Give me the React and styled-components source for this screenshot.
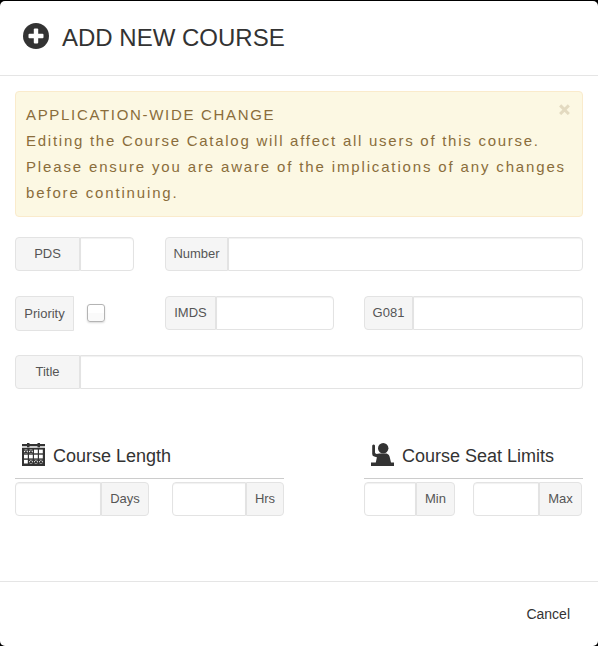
import React from "react";
import styled, { createGlobalStyle } from "styled-components";

const GlobalStyle = createGlobalStyle`
  * { box-sizing: border-box; }
  body {
    margin: 0;
    background: #000;
    font-family: "Liberation Sans", Arial, sans-serif;
    color: #333;
  }
`;

const Modal = styled.main`
  display: flex;
  flex-direction: column;
  height: 645px;
  margin-top: 1px;
  background: #fff;
  border-radius: 5px;
`;

const Header = styled.header`
  display: flex;
  align-items: center;
  gap: 13px;
  height: 75px;
  padding: 0 23px 4px;
  border-bottom: 1px solid #e5e5e5;
`;

const ModalTitle = styled.h1`
  margin: 3px 0 0;
  font-size: 24px;
  font-weight: 400;
  line-height: 30px;
  white-space: nowrap;
`;

const Body = styled.div`
  flex: 1;
  padding: 15px 15px 0;
`;

const Alert = styled.section`
  position: relative;
  height: 126px;
  margin-bottom: 20px;
  padding: 10px 10px;
  border: 1px solid #faebcc;
  border-radius: 4px;
  background: #fcf8e3;
  color: #8a6d3b;
  font-size: 15px;
  line-height: 26px;
  white-space: nowrap;
`;

const AlertLine = styled.div`
  letter-spacing: ${(p) => p.$track}px;
`;

const Dismiss = styled.button`
  position: absolute;
  top: 12px;
  right: 12px;
  display: flex;
  padding: 0;
  border: 0;
  background: none;
  color: #e3dac0;
`;

const Row = styled.div`
  display: grid;
  grid-template-columns: ${(p) => p.$columns};
  column-gap: ${(p) => p.$gap || "0"};
  height: 34px;
  margin-bottom: 25px;
`;

const Group = styled.label`
  display: flex;
  min-width: 0;
  height: 34px;
`;

const Addon = styled.span`
  flex: none;
  display: flex;
  justify-content: center;
  width: ${(p) => p.$width}px;
  height: ${(p) => (p.$tall ? 35 : 34)}px;
  padding-top: ${(p) => (p.$tall ? 2 : 1)}px;
  border: 1px solid #e3e3e3;
  border-radius: ${(p) => (p.$end ? "0 4px 4px 0" : "4px 0 0 4px")};
  background: #f5f5f5;
  color: #555;
  font-size: 13px;
  line-height: 30px;
`;

const Input = styled.input`
  flex: 1;
  width: 0;
  min-width: 0;
  height: 34px;
  padding: 6px 12px;
  border: 1px solid #e3e3e3;
  border-radius: ${(p) => (p.$start ? "4px 0 0 4px" : "0 4px 4px 0")};
  background: #fff;
  box-shadow: inset 0 1px 1px rgba(0, 0, 0, 0.06);
  outline: 0;
`;

const Checkbox = styled.input`
  appearance: none;
  width: 18px;
  height: 18px;
  margin: 8px 0 0 13px;
  border: 1px solid #b4b4b4;
  border-radius: 3px;
  background: linear-gradient(#fff 50%, #fafafa 50%);
  box-shadow: 0 1px 2px rgba(0, 0, 0, 0.15);
`;

const Sections = styled.div`
  display: grid;
  grid-template-columns: 269px 219px;
  justify-content: space-between;
  padding-top: 23px;
`;

const SectionTitle = styled.h2`
  display: flex;
  align-items: flex-start;
  gap: 8px;
  height: 42px;
  margin: 0 0 3px;
  padding: 6px 0 0 7px;
  border-bottom: 1px solid #ccc;
  font-size: 18px;
  font-weight: 400;
  line-height: 26px;
  white-space: nowrap;
`;

const Footer = styled.footer`
  display: flex;
  justify-content: flex-end;
  height: 65px;
  padding: 21px 28px 0;
  border-top: 1px solid #e5e5e5;
`;

const CancelButton = styled.button`
  height: 22px;
  padding: 0;
  border: 0;
  background: none;
  color: #333;
  font: 14px/22px "Liberation Sans", Arial, sans-serif;
`;

const PlusIcon = () => (
  <svg width="26" height="26" viewBox="0 0 26 26">
    <circle cx="13" cy="13" r="13" fill="#333" />
    <rect x="5.5" y="10.8" width="15" height="4.4" rx="1" fill="#fff" />
    <rect x="10.8" y="5.5" width="4.4" height="15" rx="1" fill="#fff" />
  </svg>
);

const CloseIcon = () => (
  <svg width="11" height="11" viewBox="0 0 11 11">
    <path d="M2.2 2.4l6.6 6.6M8.8 2.4l-6.6 6.6" stroke="currentColor" strokeWidth="3" strokeLinecap="square" />
  </svg>
);

const CalendarIcon = () => (
  <svg width="23" height="23" viewBox="0 0 23 23">
    <path d="M0 1h23v2.2H0zM5 0h2.5v4.2H5zM15.5 0H18v4.2h-2.5zM0 4.8h23V23H0z" fill="#333" />
    {[6.6, 11.7, 16.8].map((y) =>
      [2, 7, 12, 17].map((x) => (
        <rect key={`${x}-${y}`} x={x} y={y} width="3.8" height="3.7" fill="#fff" />
      ))
    )}
    <path
      d="M2 6.6l3.8 3.7m0-3.7L2 10.3M7 6.6l3.8 3.7m0-3.7L7 10.3M7 16.8l3.8 3.7m0-3.7L7 20.5M12 16.8l3.8 3.7m0-3.7L12 20.5M17 16.8l3.8 3.7m0-3.7L17 20.5"
      stroke="#333"
      strokeWidth="1.1"
    />
  </svg>
);

const StudentIcon = () => (
  <svg width="23" height="23" viewBox="0 0 23 23" fill="#333">
    <circle cx="12.2" cy="5.3" r="5.2" />
    <path d="M1.2 2.4Q2.7.8 4 2.4V9.5q.2 1.2 1.7 1.4l2.6-.3h7.4q2.7.9 3.3 4.6l1 4.4H23V23H0v-3.4h4.8l1.1-5.4-2.7-.7Q1.2 13 1.2 11z" />
  </svg>
);

function Field({ label, width, end = false }) {
  return (
    <Group>
      {end && <Input $start aria-label={label} />}
      <Addon $width={width} $end={end}>{label}</Addon>
      {!end && <Input aria-label={label} />}
    </Group>
  );
}

export default function App() {
  return (
    <>
      <GlobalStyle />
      <Modal>
        <Header>
          <PlusIcon />
          <ModalTitle>ADD NEW COURSE</ModalTitle>
        </Header>
        <Body>
          <Alert>
            <AlertLine $track={1.68}>APPLICATION-WIDE CHANGE</AlertLine>
            <AlertLine $track={1.74}>Editing the Course Catalog will affect all users of this course.</AlertLine>
            <AlertLine $track={1.85}>Please ensure you are aware of the implications of any changes</AlertLine>
            <AlertLine $track={1.85}>before continuing.</AlertLine>
            <Dismiss aria-label="Dismiss"><CloseIcon /></Dismiss>
          </Alert>
          <Row $columns="119px 418px" $gap="31px">
            <Field label="PDS" width={65} />
            <Field label="Number" width={63} />
          </Row>
          <Row $columns="150px 169px 30px 219px">
            <Group>
              <Addon $width={59} $tall>Priority</Addon>
              <Checkbox type="checkbox" />
            </Group>
            <Field label="IMDS" width={51} />
            <span />
            <Field label="G081" width={49} />
          </Row>
          <Row $columns="1fr">
            <Field label="Title" width={65} />
          </Row>
          <Sections>
            <section>
              <SectionTitle><CalendarIcon />Course Length</SectionTitle>
              <Row $columns="134px 112px" $gap="23px">
                <Field label="Days" width={48} end />
                <Field label="Hrs" width={38} end />
              </Row>
            </section>
            <section>
              <SectionTitle><StudentIcon />Course Seat Limits</SectionTitle>
              <Row $columns="91px 109px" $gap="18px">
                <Field label="Min" width={39} end />
                <Field label="Max" width={43} end />
              </Row>
            </section>
          </Sections>
        </Body>
        <Footer>
          <CancelButton>Cancel</CancelButton>
        </Footer>
      </Modal>
    </>
  );
}
